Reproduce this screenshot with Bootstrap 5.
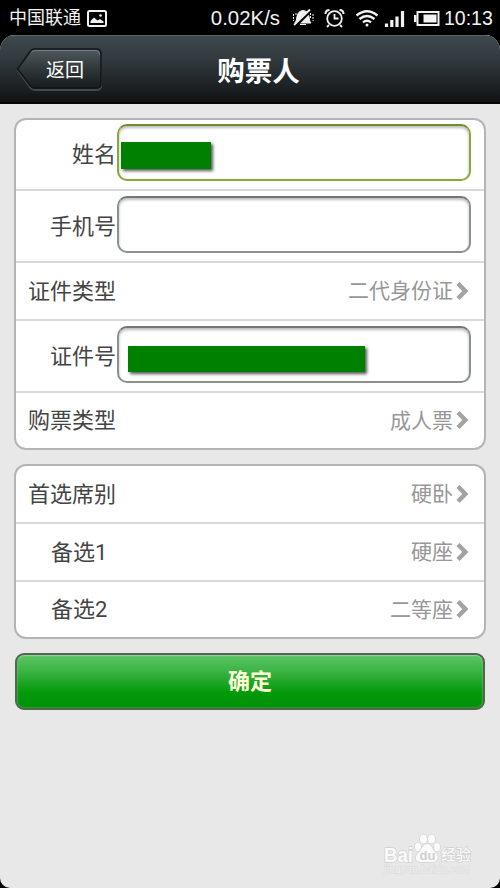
<!DOCTYPE html>
<html lang="zh-CN">
<head>
<meta charset="utf-8">
<meta name="viewport" content="width=device-width, initial-scale=1">
<title>购票人</title>
<link href="https://cdn.jsdelivr.net/npm/bootstrap@5.3.0/dist/css/bootstrap.min.css" rel="stylesheet">
<style>
body{background:#000;font-family:Roboto,"Noto Sans CJK SC",sans-serif;color:#444}
.phone{width:500px;height:888px}
.status{height:35px;color:#f2f2f2;font-size:20px;line-height:35px;padding:1px 8px 0 9px}
.carrier{font-size:18px;line-height:33px;padding-bottom:2px}
.picture{margin-left:6px}
.speed,.clock{font-family:"Liberation Sans",sans-serif;font-size:20.400px}
.clock{font-size:19.500px;width:48px;white-space:nowrap}
.app{height:853px;background:#e8e8e8;border-radius:15px 15px 10px 10px}
.topbar{height:69px;background:linear-gradient(#3f484d,#313a3e 35%,#1d2224 75%,#101314);border-top:1px solid #59636a;border-bottom:2px solid #050606}
.back{width:88px;height:44px;left:16px;top:12px;color:#fff;font-size:19px;padding:2px 0 0 10px}
.back svg{left:0;top:0}
.title{font-size:27.500px;font-weight:700;color:#fff;padding:4px 0 0 17px}
.sheet{margin:14px 14px 0;border:2px solid #b4b4b4;border-radius:12px;background:#fff}
.line{height:58px;border-bottom:2px solid #d9d9d9;font-size:22px;line-height:1;padding:1px 15px 0 12px}
.line:last-child{height:55px;border-bottom:0}
.line-tall{height:72px;padding-right:13px}
.line-first{height:71px;padding-top:0}
.name{width:89px;white-space:nowrap;padding-right:1px}
.indent{padding-left:23px}
.choice{font-size:21px;color:#979797}
.choice svg{margin:0 0 2px 3px}
.field{height:57px;margin-bottom:4px;border:2px solid #8b9091;border-top-color:#70767a;border-radius:10px;background:#fff;box-shadow:inset 0 2px 3px #bbb}
.field-active{border-color:#88a83a;border-top-color:#708c2c}
.mask{background:#008000;box-shadow:2px 2px 3px #555}
.mask-name{width:90px;height:27px;margin:6px 0 0 2px}
.mask-id{width:237px;height:26px;margin:8px 0 0 9px}
.confirm{margin:14px 15px 0;height:57px;width:470px;border:2px solid #4f6650;border-radius:9px;background:linear-gradient(#5cc665,#36b03f 35%,#049a0b 70%,#008f08);box-shadow:inset 0 1px 1px #9bcf9e,inset 0 0 2px #83b985;color:#ffffd8;font-size:22px;font-weight:700;line-height:1}
.watermark{right:26px;bottom:6px;width:94px;height:52px}
</style>
</head>
<body>
<div class="phone overflow-hidden">
  <div class="status d-flex align-items-center">
    <span class="carrier">中国联通</span>
    <svg class="picture" width="20" height="17" viewBox="0 0 20 17"><rect x="1" y="1" width="18" height="15" rx="1.5" fill="none" stroke="#f2f2f2" stroke-width="2"/><path d="M3.500 13v-2L7 7.500l3.500 3L13 9l3.500 2.500V13z" fill="#f2f2f2"/><circle cx="13.500" cy="5.500" r="1.300" fill="#f2f2f2"/></svg>
    <span class="speed ms-auto">0.02K/s</span>
    <svg width="164" height="22" viewBox="281 7 164 22" fill="none" stroke="#f2f2f2">
      <path d="M296 22.500c3-2 0-11 8-12 8 1 5 10 8 12.500h-16zM301 24.500h6" fill="#f2f2f2"/>
      <path d="M296 26 312 10" stroke="#000" stroke-width="3.500"/><path d="M295 25 311 9.500" stroke-width="1.800"/>
      <path d="M294.500 14v7M297 13v3M311.500 13v6M314 14v7" stroke-dasharray="2 1"/>
      <g stroke-width="1.800"><circle cx="335.500" cy="18.500" r="7.300"/><path d="M335.500 14v4.500h4M330 25l-2 2M341 25l2 2"/><path d="M326.500 14q0-4 4-4M344.500 14q0-4-4-4" stroke-width="2"/></g>
      <g stroke-width="2.300"><path d="M357.500 15.500q10.500-8.500 21 0M360.500 19q7.500-6 15 0M364 22.300q4-3.200 8 0"/><circle cx="368" cy="25" r="1.500" fill="#f2f2f2" stroke="none"/></g>
      <path d="M387.500 23.500v3.500M392.800 20v7M398 16.500v10.500M403.500 11v16" stroke-width="3.200"/>
      <rect x="418.500" y="12" width="21" height="13" stroke-width="2"/><path d="M417.500 15h-2.500v7h2.500zM424.500 14.500h13v8h-13z" fill="#f2f2f2" stroke="none"/>
    </svg>
    <span class="clock">10:13</span>
  </div>
  <main class="app position-relative overflow-hidden">
    <header class="topbar position-relative d-flex align-items-center justify-content-center">
      <a href="#" class="back position-absolute d-flex align-items-center justify-content-center text-decoration-none">
        <svg class="position-absolute" width="88" height="44" viewBox="0 0 88 44"><defs><linearGradient id="bg" x2="0" y2="1"><stop stop-color="#50595d"/><stop offset=".5" stop-color="#30383b"/><stop offset="1" stop-color="#171b1d"/></linearGradient></defs><path d="M1.500 22 14.500 4Q16 2 19 2h61q5 0 5 5v31q0 4-5 4H19q-3 0-4.500-2z" fill="none" stroke="#41494d" stroke-width="2"/><path d="M1.500 21 14.500 3Q16 1 19 1h61q5 0 5 5v30q0 4-5 4H19q-3 0-4.500-2z" fill="url(#bg)" stroke="#111518" stroke-width="1.500"/><path d="M15.500 4q1-1.500 4-1.500h60q4 0 4 4" fill="none" stroke="#747d81"/></svg>
        <span class="position-relative">返回</span>
      </a>
      <h1 class="title m-0">购票人</h1>
    </header>

    <section class="sheet">
      <div class="line line-tall line-first d-flex align-items-center">
        <span class="name text-end">姓名</span>
        <div class="field field-active flex-grow-1 d-flex align-items-center"><div class="mask mask-name"></div></div>
      </div>
      <div class="line line-tall d-flex align-items-center">
        <span class="name text-end">手机号</span>
        <div class="field flex-grow-1"></div>
      </div>
      <div class="line d-flex align-items-center justify-content-between">
        <span>证件类型</span>
        <span class="choice d-flex align-items-center">二代身份证<svg width="13" height="20" viewBox="0 0 13 20"><path d="M2 2.500 9.300 10 2 17.500" fill="none" stroke="#a3a3a3" stroke-width="4.500"/></svg></span>
      </div>
      <div class="line line-tall d-flex align-items-center">
        <span class="name text-end">证件号</span>
        <div class="field flex-grow-1 d-flex align-items-center"><div class="mask mask-id"></div></div>
      </div>
      <div class="line d-flex align-items-center justify-content-between">
        <span>购票类型</span>
        <span class="choice d-flex align-items-center">成人票<svg width="13" height="20" viewBox="0 0 13 20"><path d="M2 2.500 9.300 10 2 17.500" fill="none" stroke="#a3a3a3" stroke-width="4.500"/></svg></span>
      </div>
    </section>

    <section class="sheet">
      <div class="line d-flex align-items-center justify-content-between">
        <span>首选席别</span>
        <span class="choice d-flex align-items-center">硬卧<svg width="13" height="20" viewBox="0 0 13 20"><path d="M2 2.500 9.300 10 2 17.500" fill="none" stroke="#a3a3a3" stroke-width="4.500"/></svg></span>
      </div>
      <div class="line d-flex align-items-center justify-content-between">
        <span class="indent">备选1</span>
        <span class="choice d-flex align-items-center">硬座<svg width="13" height="20" viewBox="0 0 13 20"><path d="M2 2.500 9.300 10 2 17.500" fill="none" stroke="#a3a3a3" stroke-width="4.500"/></svg></span>
      </div>
      <div class="line d-flex align-items-center justify-content-between">
        <span class="indent">备选2</span>
        <span class="choice d-flex align-items-center">二等座<svg width="13" height="20" viewBox="0 0 13 20"><path d="M2 2.500 9.300 10 2 17.500" fill="none" stroke="#a3a3a3" stroke-width="4.500"/></svg></span>
      </div>
    </section>

    <button type="button" class="confirm d-block p-0">确定</button>

    <svg class="watermark position-absolute" viewBox="380 830 94 52" font-family="Liberation Sans, Noto Sans CJK SC, sans-serif" fill="#fafafa" stroke="#d0d0d0" stroke-width="1.400" paint-order="stroke">
      <text x="384" y="862" font-size="20" font-weight="700" textLength="29" lengthAdjust="spacingAndGlyphs">Bai</text>
      <ellipse cx="418" cy="847" rx="3" ry="4.500"/><ellipse cx="423.500" cy="839" rx="3.500" ry="4.500"/><ellipse cx="431.500" cy="839" rx="3.500" ry="4.500"/><ellipse cx="437" cy="847" rx="3" ry="4.500"/>
      <path d="M427 844c5 0 5 5 8 8 4 3 4 9-1 10h-14c-6-1-5-7-1-10 3-3 3-8 8-8z"/>
      <text x="419.500" y="860" font-size="13" font-weight="700" fill="#cfcfcf" stroke="none">du</text>
      <text x="441" y="860" font-size="15" font-weight="500">经验</text>
      <text x="384" y="873" font-size="10" stroke="#d6d6d6" stroke-width=".8" fill="#f0f0f0" textLength="86">jingyan.baidu.com</text>
    </svg>
  </main>
</div>
<script src="https://cdn.jsdelivr.net/npm/bootstrap@5.3.0/dist/js/bootstrap.bundle.min.js"></script>
</body>
</html>
